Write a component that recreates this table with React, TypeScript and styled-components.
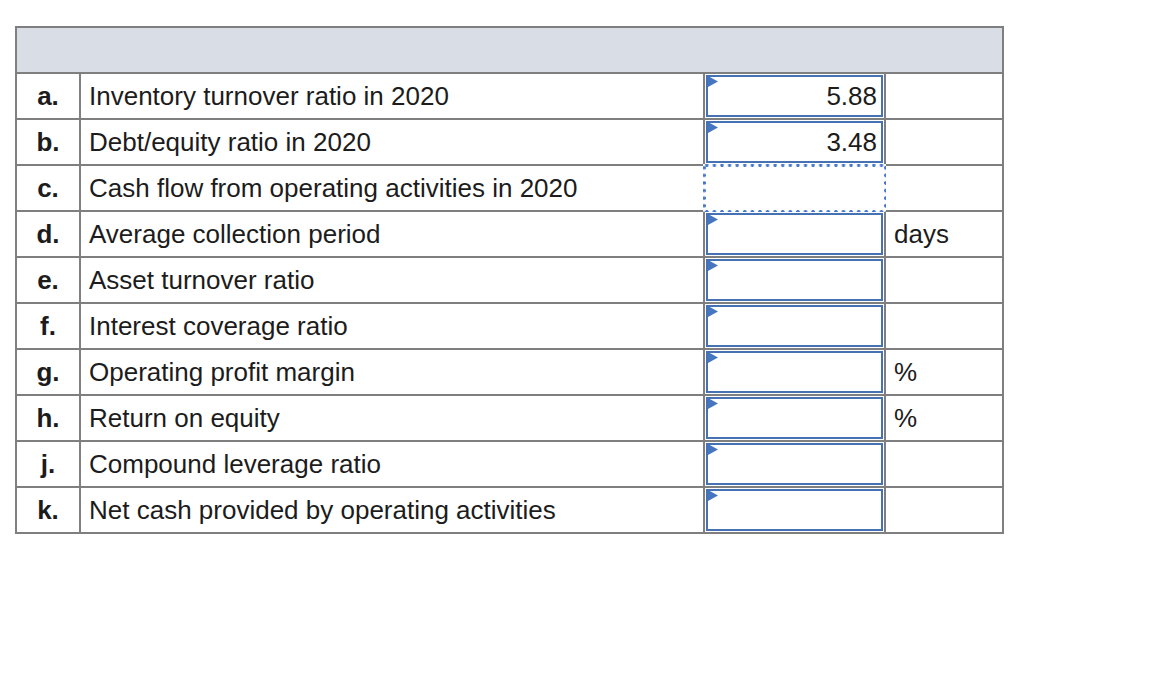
import React from "react";
import styled, { createGlobalStyle } from "styled-components";

const GlobalStyle = createGlobalStyle`
  html, body {
    margin: 0;
    padding: 0;
    background: #ffffff;
  }
  body {
    font-family: "Liberation Sans", Arial, sans-serif;
    color: #1c1c1c;
  }
`;

const Page = styled.div`
  padding: 26px 0 0 15px;
`;

const Grid = styled.div`
  display: grid;
  grid-template-columns: 62px 622px 179px 116px;
  grid-auto-rows: 44px;
  gap: 2px;
  padding: 2px;
  background: #7f7f7f;
  width: fit-content;
`;

const HeaderCell = styled.div`
  grid-column: 1 / -1;
  background: #d9dde5;
`;

const Cell = styled.div`
  background: #ffffff;
  display: flex;
  align-items: center;
  font-size: 26px;
  line-height: 1;
`;

const LabelCell = styled(Cell)`
  justify-content: center;
  font-weight: bold;
`;

const TextCell = styled(Cell)`
  padding-left: 8px;
`;

const UnitCell = styled(Cell)`
  padding-left: 8px;
`;

const InputCell = styled(Cell)`
  padding: 1px;
  align-items: stretch;
`;

const dot = "radial-gradient(circle at center, #4677c8 1.4px, rgba(70,119,200,0) 1.9px)";

const DottedCell = styled.div`
  margin: -2px;
  position: relative;
  background-color: #ffffff;
  background-image: ${dot}, ${dot}, ${dot}, ${dot};
  background-size: 7.6px 3px, 7.6px 3px, 3px 7.6px, 3px 7.6px;
  background-position: 0 -0.5px, 0 calc(100% + 0.5px), -0.5px 0, calc(100% + 0.5px) 0;
  background-repeat: repeat-x, repeat-x, repeat-y, repeat-y;
`;

const InputBox = styled.div`
  position: relative;
  flex: 1;
  border: 2px solid #4672b3;
  display: flex;
  align-items: center;
  justify-content: flex-end;
  padding-right: 4px;
  font-size: 26px;
`;

const Flag = styled.span`
  position: absolute;
  top: -1px;
  left: 0;
  width: 10px;
  height: 11px;
  background: #4676c0;
  clip-path: polygon(0 0, 100% 50%, 0 100%);
`;

type Row = {
  label: string;
  text: string;
  value?: string;
  dotted?: boolean;
  unit?: string;
};

const rows: Row[] = [
  { label: "a.", text: "Inventory turnover ratio in 2020", value: "5.88" },
  { label: "b.", text: "Debt/equity ratio in 2020", value: "3.48" },
  { label: "c.", text: "Cash flow from operating activities in 2020", dotted: true },
  { label: "d.", text: "Average collection period", value: "", unit: "days" },
  { label: "e.", text: "Asset turnover ratio", value: "" },
  { label: "f.", text: "Interest coverage ratio", value: "" },
  { label: "g.", text: "Operating profit margin", value: "", unit: "%" },
  { label: "h.", text: "Return on equity", value: "", unit: "%" },
  { label: "j.", text: "Compound leverage ratio", value: "" },
  { label: "k.", text: "Net cash provided by operating activities", value: "" },
];

export default function App() {
  return (
    <>
      <GlobalStyle />
      <Page>
        <Grid>
          <HeaderCell />
          {rows.map((r) => (
            <React.Fragment key={r.label}>
              <LabelCell>{r.label}</LabelCell>
              <TextCell>{r.text}</TextCell>
              {r.dotted ? (
                <DottedCell />
              ) : (
                <InputCell>
                  <InputBox>
                    <Flag />
                    {r.value}
                  </InputBox>
                </InputCell>
              )}
              <UnitCell>{r.unit ?? ""}</UnitCell>
            </React.Fragment>
          ))}
        </Grid>
      </Page>
    </>
  );
}
